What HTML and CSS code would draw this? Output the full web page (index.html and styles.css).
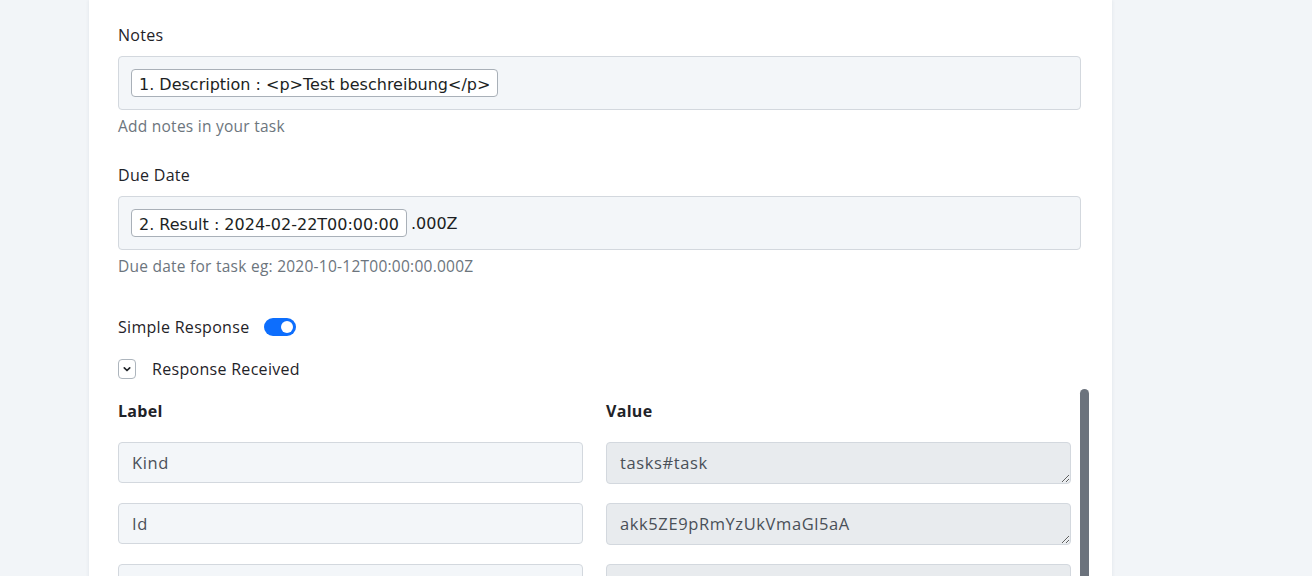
FILE: index.html
```html
<!doctype html>
<html lang="en">

<head>
  <meta charset="utf-8" />
  <meta name="viewport" content="width=device-width, initial-scale=1.0" />
  <title>Task step</title>
  <link rel="stylesheet" href="styles.css">
</head>

<body>
  <div class="page">
    <div class="card">

      <div class="field">
        <label class="field-label">Notes</label>
        <div class="token-input">
          <span class="token">1. Description : &lt;p&gt;Test beschreibung&lt;/p&gt;</span>
        </div>
        <div class="help">Add notes in your task</div>
      </div>

      <div class="field">
        <label class="field-label">Due Date</label>
        <div class="token-input">
          <span class="token">2. Result : 2024-02-22T00:00:00</span>
          <span class="token-tail">.000Z</span>
        </div>
        <div class="help">Due date for task eg: 2020-10-12T00:00:00.000Z</div>
      </div>

      <div class="switch-row">
        <span>Simple Response</span>
        <span class="switch"><span class="knob"></span></span>
      </div>

      <div class="collapse-row">
        <span class="chevron">
          <svg width="10" height="10" viewBox="0 0 10 10">
            <path d="M2.3 3.8 L5 6.5 L7.7 3.8" fill="none" stroke="#212529" stroke-width="1.7" stroke-linecap="round" stroke-linejoin="round" />
          </svg>
        </span>
        <span>Response Received</span>
      </div>

      <div class="response">
        <div class="kv-table">
          <div class="kv-head">Label</div>
          <div class="kv-head">Value</div>

          <input class="kv-label" value="Kind" readonly>
          <textarea class="kv-value" rows="1" disabled>tasks#task</textarea>

          <input class="kv-label" value="Id" readonly>
          <textarea class="kv-value" rows="1" disabled>akk5ZE9pRmYzUkVmaGl5aA</textarea>

          <input class="kv-label" value="" readonly>
          <textarea class="kv-value" rows="1" disabled></textarea>
        </div>
        <!-- thumb of the response list scroller -->
        <div class="scroll-thumb"></div>
      </div>

    </div>
  </div>
</body>

</html>
```

FILE: styles.css
```css
 html,
 body {
   margin: 0;
   height: 100%;
   overflow: hidden;
 }

 body {
   background: #f2f5f8;
   font-family: "Open Sans", "Noto Sans", sans-serif;
   font-size: 16px;
   letter-spacing: 0.3px;
   color: #1f2328;
 }

 *,
 *:before,
 *:after {
   box-sizing: border-box;
 }

 .page {
   padding-left: 89px;
   height: 100%;
 }

 /* White panel holding the step form */
 .card {
   width: 1023px;
   min-height: 100%;
   background: #fff;
   box-shadow: 0 0 4px rgba(30, 40, 60, 0.08);
   padding: 23px 31px 0 29px;
 }

 .field {
   margin-bottom: 27px;
 }

 .field-label {
   display: block;
   line-height: 24px;
   margin-bottom: 9px;
 }

 /* Input that shows mapped values as chips */
 .token-input {
   display: flex;
   align-items: center;
   gap: 4px;
   height: 54px;
   padding: 0 12px;
   background: #f3f6f9;
   border: 1px solid #d3d8de;
   border-radius: 4px;
   font-family: "DejaVu Sans", sans-serif;
   font-size: 16px;
   letter-spacing: 0;
   color: #1c1f23;
 }

 .token {
   display: inline-block;
   height: 28px;
   line-height: 27px;
   padding: 1px 7px 0;
   background: #fff;
   border: 1px solid #a9b0b8;
   border-radius: 4px;
   white-space: nowrap;
 }

 .token-tail {
   padding-top: 1px;
 }

 .help {
   margin-top: 6px;
   line-height: 20px;
   font-size: 15.5px;
   letter-spacing: 0.25px;
   color: #6c757d;
 }

 .switch-row {
   display: flex;
   align-items: center;
   gap: 15px;
   line-height: 24px;
   margin-top: 39px;
 }

 .switch {
   position: relative;
   display: inline-block;
   width: 32px;
   height: 18px;
   border-radius: 9px;
   background: #0d6efd;
 }

 .switch .knob {
   position: absolute;
   top: 3px;
   right: 3px;
   width: 12px;
   height: 12px;
   border-radius: 50%;
   background: #fff;
 }

 .collapse-row {
   display: flex;
   align-items: center;
   gap: 16px;
   line-height: 24px;
   margin-top: 18px;
 }

 .chevron {
   display: flex;
   align-items: center;
   justify-content: center;
   width: 18px;
   height: 20px;
   border: 1px solid #adb5bd;
   border-radius: 4px;
 }

 /* Label / value pairs of the response */
 .response {
   display: flex;
   gap: 9px;
   margin-top: 18px;
   margin-right: -8px;
 }

 .kv-table {
   flex: none;
   width: 953px;
   display: grid;
   grid-template-columns: 465px 465px;
   column-gap: 23px;
   row-gap: 19px;
   align-items: start;
 }

 .kv-head {
   font-weight: 700;
   line-height: 24px;
 }

 .kv-label,
 .kv-value {
   width: 100%;
   margin: 0;
   padding: 0 13px;
   font-family: "Open Sans", sans-serif;
   font-size: 16.5px;
   letter-spacing: 0.6px;
   color: #4a5058;
   border: 1px solid #d3d8de;
   border-radius: 4px;
   outline: none;
 }

 .kv-label {
   height: 41px;
   background: #f3f6f9;
 }

 .kv-value {
   height: 42px;
   padding-top: 9px;
   line-height: 22px;
   background: #e8ebee;
   resize: vertical;
   overflow: hidden;
 }

 .scroll-thumb {
   flex: none;
   width: 9px;
   height: 200px;
   margin-top: -10px;
   background: #6c737d;
   border-radius: 5px 5px 0 0;
 }
```
